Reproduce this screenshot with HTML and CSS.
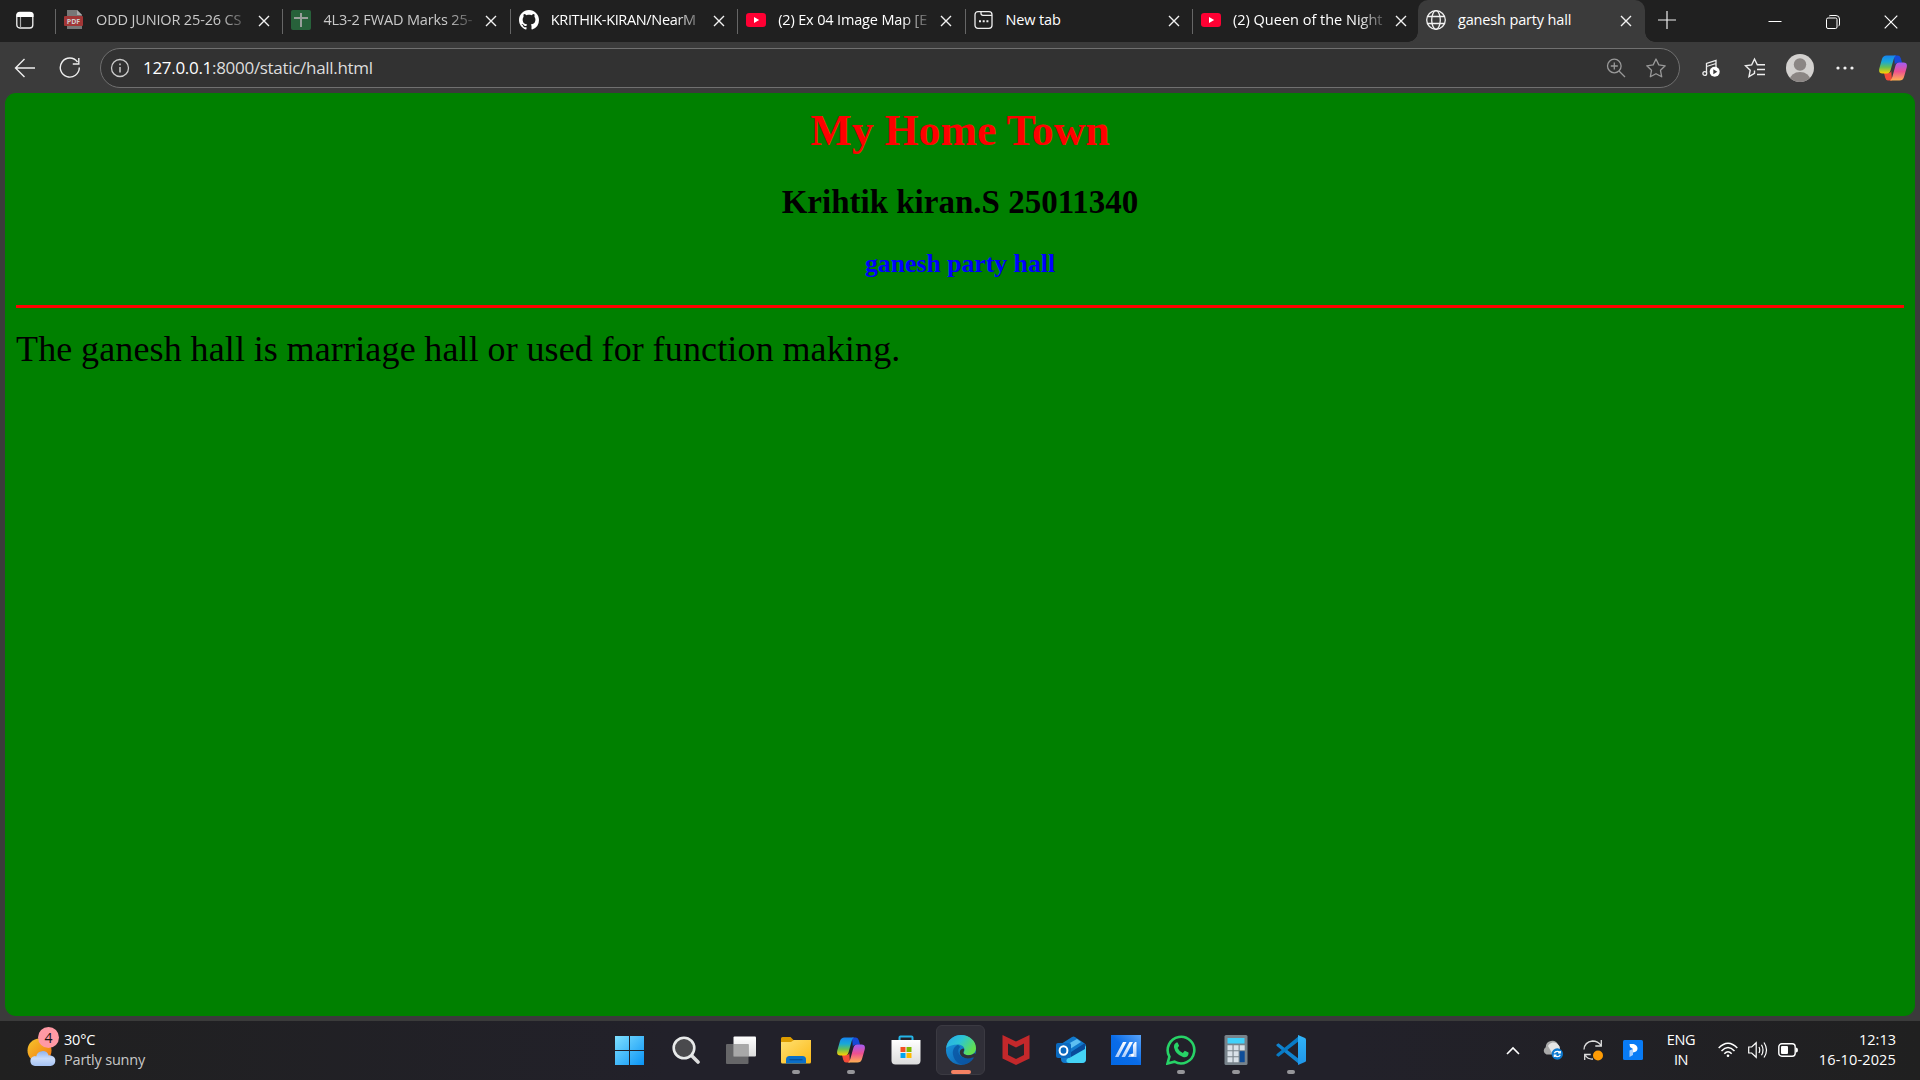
FILE: index.html
```html
<!DOCTYPE html>
<html lang="en">
<head>
<meta charset="utf-8">
<title>ganesh party hall</title>
<link rel="stylesheet" href="styles.css">
</head>
<body>
<svg class="defs" width="0" height="0" aria-hidden="true">
  <defs>
    <linearGradient id="cpA" x1="0" y1="0" x2="0" y2="1"><stop offset="0" stop-color="#1684f0"/><stop offset=".35" stop-color="#19a8d8"/><stop offset=".65" stop-color="#66bf55"/><stop offset="1" stop-color="#ffd000"/></linearGradient>
    <linearGradient id="cpB" x1="0" y1="0" x2="0" y2="1"><stop offset="0" stop-color="#a15cf5"/><stop offset=".5" stop-color="#ee5090"/><stop offset="1" stop-color="#ffb152"/></linearGradient>
    <linearGradient id="win" x1="0" y1="0" x2="1" y2="1"><stop offset="0" stop-color="#7fe0ff"/><stop offset="1" stop-color="#0a94f5"/></linearGradient>
    <linearGradient id="folder" x1="0" y1="0" x2="1" y2="1"><stop offset="0" stop-color="#ffe072"/><stop offset="1" stop-color="#fcb916"/></linearGradient>
    <linearGradient id="sun" x1="0" y1="0" x2="1" y2="1"><stop offset="0" stop-color="#f5c62c"/><stop offset="1" stop-color="#f4730f"/></linearGradient>
    <linearGradient id="cloud" x1="0" y1="0" x2="0" y2="1"><stop offset="0" stop-color="#8fb3ee"/><stop offset=".5" stop-color="#c9dcfb"/><stop offset="1" stop-color="#a5c2f3"/></linearGradient>
    <linearGradient id="edgeTop" x1="0" y1="0" x2="1" y2=".5"><stop offset="0" stop-color="#29a8ec"/><stop offset=".5" stop-color="#2cc5d5"/><stop offset="1" stop-color="#62df50"/></linearGradient>
    <linearGradient id="edgeLow" x1="0" y1="0" x2="1" y2="1"><stop offset="0" stop-color="#1b9de2"/><stop offset="1" stop-color="#0b55a5"/></linearGradient>
    <linearGradient id="white" x1="0" y1="0" x2="0" y2="1"><stop offset="0" stop-color="#fff"/><stop offset="1" stop-color="#dcdcdc"/></linearGradient>
    <linearGradient id="vs" x1="0" y1="0" x2="0" y2="1"><stop offset="0" stop-color="#31b4f8"/><stop offset="1" stop-color="#1f95e8"/></linearGradient>
    <linearGradient id="asus" x1="1" y1="0" x2="0" y2="1"><stop offset="0" stop-color="#5aa4f9"/><stop offset=".5" stop-color="#0a6ce8"/><stop offset="1" stop-color="#0268e4"/></linearGradient>
    <linearGradient id="slash" x1="0" y1="0" x2="0" y2="1"><stop offset="0" stop-color="#fff"/><stop offset="1" stop-color="#a9cbfb"/></linearGradient>
    <symbol id="close" viewBox="0 0 12 12"><path d="M1 1l10 10M11 1L1 11" fill="none" stroke="#f2f2f2" stroke-width="1.4"/></symbol>
    <symbol id="youtube" viewBox="0 0 20 20"><rect y="3" width="20" height="14" rx="3.2" fill="#ff0033"/><path d="M8 7v6l5.2-3z" fill="#fff"/></symbol>
    <symbol id="copilot" viewBox="0 0 28 26">
      <path d="M15 .5h4q2 0 2.8 2.8l1.3 4.5h-4.5q-2.300 0-2.800 2z" fill="#1649d8"/>
      <path d="M13 25.500H9q-2 0-2.800-2.800L5 18h4.500q2.300 0 2.800-2z" fill="#f34b39"/>
      <path d="M7.500.5H17q-1.500.7-2.300 3.500L11.500 15.500q-.9 3-3.700 3H3.500Q-.8 18.500.3 13.500L3 4Q4 .5 7.500.5z" fill="url(#cpA)"/>
      <path d="M20.500 25.500H11q1.500-.7 2.300-3.500l3.200-11.500q.9-3 3.700-3h4.300q4.300 0 3.200 5L25 22q-1 3.500-4.500 3.500z" fill="url(#cpB)"/>
    </symbol>
  </defs>
</svg>

<header class="tabstrip">
  <button class="tab-actions"><svg width="20" height="20" viewBox="0 0 20 20"><rect x="1.800" y="2.500" width="16" height="15.500" rx="3" fill="none" stroke="#f2f2f2" stroke-width="1.300"/><path d="M1.500 7V4.500q0-2.500 3-2.500h11q3 0 3 2.500V7z" fill="#fff"/><path d="M5.500 7v11" stroke="#aaa" stroke-width="1.200"/></svg></button>
  <nav class="tabs">
    <div class="tab tab-sleeping">
      <svg class="favicon" viewBox="0 0 20 20"><path d="M3 0h10l5 5v14H3z" fill="#777"/><path d="M13 0v5h5z" fill="#aaa"/><rect y="6" width="19" height="10" rx="1" fill="#a23636"/><text x="9.500" y="13.500" class="pdf-label">PDF</text></svg>
      <span class="tab-title faded">ODD JUNIOR 25-26 CS</span><svg class="tab-close"><use href="#close"/></svg>
    </div>
    <div class="tab tab-sleeping">
      <svg class="favicon" viewBox="0 0 20 20"><rect width="20" height="20" rx="2" fill="#27613a"/><path d="M10 3v14M3 8h14" stroke="#999f9b" stroke-width="2"/></svg>
      <span class="tab-title faded">4L3-2 FWAD Marks 25-</span><svg class="tab-close"><use href="#close"/></svg>
    </div>
    <div class="tab">
      <svg class="favicon" viewBox="0 0 16 16"><path fill="#fff" d="M8 0C3.580 0 0 3.580 0 8c0 3.540 2.290 6.530 5.470 7.590.4.070.55-.17.55-.38 0-.19-.01-.82-.01-1.490-2.010.37-2.530-.49-2.690-.94-.09-.23-.48-.94-.82-1.130-.28-.15-.68-.52-.01-.53.63-.01 1.080.58 1.230.82.72 1.210 1.870.87 2.330.66.070-.52.28-.87.51-1.070-1.780-.2-3.640-.89-3.640-3.950 0-.87.31-1.590.82-2.150-.08-.2-.36-1.020.08-2.120 0 0 .67-.21 2.200.82.64-.18 1.320-.27 2-.27s1.360.09 2 .27c1.530-1.040 2.200-.82 2.200-.82.44 1.100.16 1.920.08 2.120.51.56.82 1.270.82 2.150 0 3.070-1.870 3.750-3.650 3.950.29.25.54.73.54 1.480 0 1.070-.01 1.930-.01 2.200 0 .21.15.46.55.38A8.010 8.010 0 0 0 16 8c0-4.420-3.580-8-8-8z"/></svg>
      <span class="tab-title tight faded">KRITHIK-KIRAN/NearM</span><svg class="tab-close"><use href="#close"/></svg>
    </div>
    <div class="tab">
      <svg class="favicon"><use href="#youtube"/></svg>
      <span class="tab-title faded">(2) Ex 04 Image Map [E</span><svg class="tab-close"><use href="#close"/></svg>
    </div>
    <div class="tab">
      <svg class="favicon" viewBox="0 0 20 20" fill="none" stroke="#eee" stroke-width="1.300"><rect x="1" y="1.700" width="17" height="16.600" rx="3"/><path d="M7 2v1.500q0 1.800 2 1.800h9"/><path d="M5 11.200h2M8.700 11.200h2M12.400 11.200h2" stroke-width="2"/></svg>
      <span class="tab-title">New tab</span><svg class="tab-close"><use href="#close"/></svg>
    </div>
    <div class="tab">
      <svg class="favicon"><use href="#youtube"/></svg>
      <span class="tab-title wide faded">(2) Queen of the Night</span><svg class="tab-close"><use href="#close"/></svg>
    </div>
    <div class="tab tab-active">
      <svg class="favicon" viewBox="0 0 20 20" fill="none" stroke="#f2f2f2" stroke-width="1.300"><circle cx="10" cy="10" r="9.300"/><ellipse cx="10" cy="10" rx="4.300" ry="9.300"/><path d="M1.500 6.500h17M1.500 13.500h17"/></svg>
      <span class="tab-title">ganesh party hall</span><svg class="tab-close"><use href="#close"/></svg>
    </div>
  </nav>
  <button class="new-tab"><svg width="18" height="18" viewBox="0 0 18 18"><path d="M9 0v18M0 9h18" stroke="#eee" stroke-width="1.200"/></svg></button>
  <div class="window-controls">
    <button><svg width="14" height="14" viewBox="0 0 14 14"><path d="M.5 6.500h13" stroke="#fff"/></svg></button>
    <button><svg width="14" height="14" viewBox="0 0 14 14" fill="none" stroke="#fff"><rect x=".5" y="3" width="10.500" height="10.500" rx="1.500"/><path d="M3 1.200Q3.500.5 5 .5h5q3.500 0 3.500 3.500v5q0 1.500-1 2.200"/></svg></button>
    <button><svg width="14" height="14" viewBox="0 0 14 14"><path d="M.7.7l12.600 12.600M13.300.7L.7 13.300" stroke="#fff" stroke-width="1.200"/></svg></button>
  </div>
</header>

<div class="toolbar">
  <button class="tool"><svg width="22" height="20" viewBox="0 0 22 20" fill="none" stroke="#eee" stroke-width="1.400"><path d="M21 10H2M10.500 1L1.500 10l9 9"/></svg></button>
  <button class="tool"><svg width="22" height="22" viewBox="0 0 22 22" fill="none" stroke="#eee" stroke-width="1.400"><path d="M20.300 10.500A9.500 9.500 0 1 1 18.500 5M19.800 1v6h-6"/></svg></button>
  <div class="address">
    <svg width="20" height="20" viewBox="0 0 20 20" fill="none" stroke="#ccc" stroke-width="1.300"><circle cx="10" cy="10" r="8.500"/><path d="M10 9v5.500M10 5.600v1.600" stroke-width="1.500"/></svg>
    <div class="url"><span class="host">127.0.0.1</span>:8000/static/hall.html</div>
    <svg class="zoom-icon" width="20" height="20" viewBox="0 0 20 20" fill="none" stroke="#999" stroke-width="1.300"><circle cx="8.300" cy="8" r="6.800"/><path d="M13 13l6 6M8.300 4.500v7M4.800 8h7"/></svg>
    <svg width="22" height="22" viewBox="0 0 22 22" fill="none" stroke="#999" stroke-width="1.300" stroke-linejoin="round"><path d="M11 2l2.800 5.900 6.400.9-4.700 4.500 1.200 6.500-5.700-3.100-5.700 3.100 1.200-6.500L1.800 8.800l6.400-.9z"/></svg>
  </div>
  <div class="tools">
    <svg width="18" height="18" viewBox="0 0 18 18"><path d="M4.500 14V4.500L14 1.500V9M4.500 7.500L14 4.500" fill="none" stroke="#eee" stroke-width="1.300"/><circle cx="2.800" cy="14.500" r="1.900" fill="none" stroke="#eee" stroke-width="1.300"/><circle cx="12.700" cy="12.800" r="5" fill="#fff"/><path d="M11.300 10.300v5l4-2.500z" fill="#3b3b3b"/></svg>
    <svg class="favorites" width="22" height="22" viewBox="0 0 22 22" fill="none" stroke="#eee" stroke-width="1.400"><path d="M10.500 13.500v2.800L5 19.600l1.200-6.300L1.500 8.800l6.200-.9L10.500 2l2.800 5.700H21M13 12.500h8M13 17.500h8"/></svg>
    <svg class="avatar" width="28" height="28" viewBox="0 0 28 28"><clipPath id="av"><circle cx="14" cy="14" r="14"/></clipPath><g clip-path="url(#av)"><path fill="#d3d1cf" d="M0 0h28v28H0z"/><circle cx="14" cy="10.500" r="6.200" fill="#8b8684"/><ellipse cx="14" cy="26.500" rx="10.500" ry="8.500" fill="#8b8684"/></g></svg>
    <svg class="more" width="18" height="4" viewBox="0 0 18 4" fill="#f2f2f2"><circle cx="2" cy="2" r="1.600"/><circle cx="9" cy="2" r="1.600"/><circle cx="16" cy="2" r="1.600"/></svg>
    <svg class="tool-copilot" width="28" height="26"><use href="#copilot"/></svg>
  </div>
</div>

<div class="viewport">
  <main class="page">
    <h1>My Home Town</h1>
    <h2>Krihtik kiran.S 25011340</h2>
    <h3>ganesh party hall</h3>
    <hr>
    <p>The ganesh hall is marriage hall or used for function making.</p>
  </main>
</div>

<footer class="taskbar">
  <div class="weather">
    <div class="weather-icon">
      <svg width="30" height="30" viewBox="0 0 30 30"><circle cx="12.500" cy="13.500" r="12" fill="url(#sun)"/><path d="M8 29a5 5 0 0 1-1-9.800q1.500-.3 2.200.2a6.500 6.500 0 0 1 12.500-1q1.500-.4 2.800.4A5.200 5.200 0 0 1 23.500 29z" fill="url(#cloud)"/></svg>
      <span class="badge">4</span>
    </div>
    <div class="weather-text"><div class="temp">30°C</div><div class="sky">Partly sunny</div></div>
  </div>
  <div class="apps">
    <div class="app start"><svg width="29" height="29" viewBox="0 0 29 29" fill="url(#win)"><path d="M0 0h14v14H0zM15 0h14v14H15zM0 15h14v14H0zM15 15h14v14H15z"/></svg></div>
    <div class="app"><svg width="28" height="28" viewBox="0 0 28 28"><path d="M19 19l7 7" stroke="#ddd" stroke-width="3.600" stroke-linecap="round"/><circle cx="12" cy="12" r="10.300" fill="#4a4a4d" stroke="#e8eaea" stroke-width="2.600"/></svg></div>
    <div class="app"><svg width="30" height="28" viewBox="0 0 30 28"><rect x="7.500" y=".5" width="22.500" height="20" rx="1" fill="url(#white)"/><rect x="0" y="8" width="22.500" height="20" rx="1" fill="#707071" opacity=".88"/><path d="M7.500 8h15v12.500h-15z" fill="#a8a8a8"/></svg></div>
    <div class="app running"><svg width="30" height="28" viewBox="0 0 30 28"><path d="M0 2.500Q0 1 1.500 1h8l3 3H25v8H0z" fill="#dd9c00"/><path d="M0 6h10l3-2h17v22q0 1.500-1.500 1.500h-27Q0 27.500 0 26z" fill="url(#folder)"/><path d="M5 27.500v-4q0-3.500 3.500-3.500h13q3.500 0 3.500 3.500v4z" fill="#0b6fc8"/><path d="M8.500 23.700h13" stroke="#07509a" stroke-width="1.300"/></svg></div>
    <div class="app running"><svg width="28" height="26"><use href="#copilot"/></svg></div>
    <div class="app"><svg width="30" height="30" viewBox="0 0 30 30"><path d="M8.500 6V2.500q0-1 1-1h11q1 0 1 1V6" fill="none" stroke="#24b5e8" stroke-width="2"/><path d="M.5 5h29v20.500q0 4-4 4h-21q-4 0-4-4z" fill="url(#white)"/><path fill="#f25022" d="M9.500 12h5v5h-5z"/><path fill="#7fba00" d="M15.500 12h5v5h-5z"/><path fill="#00a4ef" d="M9.500 18h5v5h-5z"/><path fill="#ffb900" d="M15.500 18h5v5h-5z"/></svg></div>
    <div class="app focused"><svg width="30" height="30" viewBox="0 0 30 30"><circle cx="15" cy="15" r="15" fill="url(#edgeLow)"/><path d="M.2 13C1 5.500 7.200 0 15 0c8.500 0 15 6 15 13.200 0 4.500-3.500 7-7.500 7-3.500 0-5-1.300-5-2.200 0-.8 1-1.200 1-3.200 0-3-2.800-5.300-6.800-5.300C7 9.500 3 11 .2 13z" fill="url(#edgeTop)"/><path d="M12 9.700C8 11.500 6.300 15.500 7 19.500c.8 5 4.500 9.300 9.500 10.300 4-.3 8.500-3 10.800-6.800.2-.6-.3-.8-.8-.5-6 2.500-14.200-.5-14.200-6.500 0-1.800.8-3 1.900-4z" fill="#0a529f" opacity=".75"/><path d="M17.800 13.500c1 2-.8 3.500-.3 4.700.8 1.600 3.500 2 5 2 2.500 0 4.500-.8 5.800-2l2.200 1-2 3.500-2-.2c-6 2.500-13-.5-12.700-5.500.1-2 2-3.500 4-3.500z" fill="#302f38"/></svg></div>
    <div class="app"><svg width="28" height="30" viewBox="0 0 28 30"><path d="M.5 0L14 6.500 27.500 0v23.500L14 30 .5 23.500z" fill="#c3282b"/><path d="M6 8.500l8 4 8-4v11.500L14 24l-8-4z" fill="#24222a"/></svg></div>
    <div class="app"><svg width="30" height="28" viewBox="0 0 30 28"><path d="M5 8L16 1q1.500-.8 3 0l9 6q2 1.200 2 3v13q0 4-4 4H9q-4 0-4-4z" fill="#1179cc"/><path d="M12 8l9-5 4 3-11 7z" fill="#5dbff2"/><path d="M30 10L11 23q-2 3 2 4h13q4 0 4-4z" fill="#45d3f5"/><path d="M15 16L29 7v6l-14 8z" fill="#084b9b"/><rect y="7" width="15" height="15" rx="2" fill="#0a69be"/><ellipse cx="7.500" cy="14.500" rx="3.900" ry="4.300" fill="none" stroke="#fff" stroke-width="2"/></svg></div>
    <div class="app"><svg width="30" height="30" viewBox="0 0 30 30"><path d="M0 0h30v30H0z" fill="url(#asus)"/><path d="M4 22L12 7h3.500L7.500 22zM10.500 22l8-15H22l-8 15zM17 22l1.700-3H22v-9l2-3h1.500v15z" fill="url(#slash)"/><circle cx="21.500" cy="20" r="1.500" fill="#fff"/></svg></div>
    <div class="app running"><svg width="30" height="30" viewBox="0 0 30 30"><path d="M1.500 28.500L3.400 21.600A13.300 13.300 0 1 1 8.500 26.700z" fill="none" stroke="#27d367" stroke-width="2.600"/><path d="M10.500 7.500q-3 1.500-2.500 5 1.500 7 9 9.500 4.500 1 5.500-3v-1.500L18.800 15.700l-2 2.200q-3.500-1.300-5.200-5l1.500-2.200-1.500-3.200z" fill="#27d367"/></svg></div>
    <div class="app running"><svg width="24" height="30" viewBox="0 0 24 30"><rect x=".5" width="23" height="30" rx="1.500" fill="#78838b"/><path d="M3.500 3h17v5.500h-17z" fill="#3fd1fa"/><path d="M3.500 10.200h5v5h-5zM9.600 10.200h5v5h-5zM15.700 10.200h5v5h-5zM3.500 16.200h5v5h-5zM9.600 16.200h5v5h-5zM3.500 22.200h5v5h-5zM9.600 22.200h5v5h-5z" fill="#d9e1e8"/><path d="M15.700 16.200h5v11h-5z" fill="#0e4d98"/></svg></div>
    <div class="app running"><svg width="30" height="30" viewBox="0 0 30 30"><path d="M2.500 8.200L23 24v5L.8 11q-1-1 0-1.800z" fill="#1184d0"/><path d="M2.500 21.800L23 6V1L.8 19q-1 1 0 1.800z" fill="#087bc5"/><path d="M22 0l7 3q1 .5 1 1.500v21q0 1-1 1.500l-7 3z" fill="url(#vs)"/></svg></div>
  </div>
  <div class="tray">
    <div class="tray-item"><svg width="14" height="9" viewBox="0 0 14 9"><path d="M1 8l6-6 6 6" fill="none" stroke="#fff" stroke-width="1.600"/></svg></div>
    <div class="tray-item"><svg width="20" height="20" viewBox="0 0 20 20"><path d="M3.500 14.500a4 4 0 0 1-.8-7.200A6.500 6.500 0 0 1 15 4.500q2 1.500 1.800 4.500L12 14.500z" fill="#a9a9a9"/><path d="M5 6a6 6 0 0 1 10-1.500q2 1.500 1.800 4.500L9 13z" fill="#e6e6e6"/><circle cx="14.300" cy="14" r="5.700" fill="#0c79d0"/><path d="M11.300 13.300q.7-2 3-2 1.300 0 2.500 1.200M17.300 11v2h-2.200M17.300 14.700q-.7 2-3 2-1.300 0-2.500-1.200M11.300 17v-2h2.200" fill="none" stroke="#fff" stroke-width="1.200"/></svg></div>
    <div class="tray-item"><svg width="20" height="21" viewBox="0 0 20 21"><path d="M1 9.500Q1.500 2 9.500 1q5.500 0 8.500 4.500M18.300 0v6h-6M10 19Q5 19.500 2.500 15.500M1.700 20v-5.500h6" fill="none" stroke="#ddd" stroke-width="1.300"/><circle cx="15" cy="15.500" r="5" fill="#ff9c05"/></svg></div>
    <div class="tray-item"><svg width="20" height="20" viewBox="0 0 20 20"><rect width="20" height="20" rx="1.500" fill="#087bf5"/><path d="M6.500 4h4q4 1 4 4.500T10 12.500V9L7 7z" fill="#fff"/><path d="M6.500 10.500L10 9v6l-3.500 2z" fill="#a8d0ff"/></svg></div>
    <div class="language"><div>ENG</div><div>IN</div></div>
    <div class="status">
      <svg width="20" height="16" viewBox="0 0 20 16" fill="none" stroke="#fff" stroke-width="1.500"><path d="M.7 6Q10-3.500 19.300 6M3.500 9Q10 2.200 16.500 9M6.300 11.700q3.700-3.800 7.400 0"/><circle cx="10" cy="13.800" r="1.300" fill="#fff" stroke="none"/></svg>
      <svg width="20" height="18" viewBox="0 0 20 18" fill="none" stroke="#fff" stroke-width="1.200"><path d="M.7 6h3l4.500-4.300v14.600L3.700 12h-3zM11 6q1.500 3 0 6M13.500 3.700q3 5.300 0 10.600M16 1.500q5 7.500 0 15"/></svg>
      <svg width="20" height="14" viewBox="0 0 20 14"><rect x=".8" y=".8" width="16.400" height="12.400" rx="3" fill="none" stroke="#fff" stroke-width="1.400"/><rect x="3" y="3" width="7" height="8" rx="1" fill="#fff"/><path d="M18 4.500q2 0 2 2.500t-2 2.500z" fill="#fff"/></svg>
    </div>
    <div class="clock"><div class="time">12:13</div><div class="date">16-10-2025</div></div>
  </div>
</footer>
</body>
</html>
```
FILE: styles.css
```css
* { box-sizing: border-box; }

body {
  margin: 0;
  width: 1920px;
  height: 1080px;
  overflow: hidden;
  display: flex;
  flex-direction: column;
  background: #3b3b3b;
  color: #fff;
  font-family: "Open Sans", "Noto Sans", sans-serif;
}

svg { display: block; flex: none; }
.defs { position: absolute; }

button {
  display: flex;
  align-items: center;
  justify-content: center;
  margin: 0;
  padding: 0;
  border: 0;
  background: none;
}

/* Tab strip */
.tabstrip { display: flex; flex: none; height: 42px; background: #202020; }
.tab-actions { width: 55px; padding: 0 5px 2px 0; }
.tabs { display: flex; }

.tab {
  position: relative;
  display: flex;
  align-items: center;
  width: 227.400px;
  height: 42px;
  padding: 0 0 2px 9px;
}
.tab::before {
  content: "";
  position: absolute;
  left: 0;
  top: 9px;
  width: 1px;
  height: 25px;
  background: #666;
}
.favicon { width: 20px; height: 20px; }
.pdf-label { font: bold 7px "Open Sans", sans-serif; fill: #ccc; text-anchor: middle; }
.tab-title {
  width: 152px;
  margin-left: 12px;
  white-space: nowrap;
  font-size: 14.500px;
  line-height: 20px;
  letter-spacing: -0.15px;
}
.tab-title.tight { letter-spacing: -0.35px; }
.tab-title.wide { letter-spacing: 0; }
.faded {
  -webkit-mask-image: linear-gradient(90deg, #000 82%, rgba(0, 0, 0, 0.15));
  mask-image: linear-gradient(90deg, #000 82%, rgba(0, 0, 0, 0.15));
}
.tab-sleeping .tab-title { color: #c9c9c9; }
.tab-close { width: 12px; height: 12px; margin: 2px 0 0 10px; }

.tab-active { margin-left: -1.400px; padding-left: 8px; background: #3b3b3b; border-radius: 10px 10px 0 0; }
.tab-active::before,
.tab-active::after {
  top: auto;
  bottom: 0;
  width: 10px;
  height: 10px;
  background: radial-gradient(circle at 0 0, #202020 9.500px, #3b3b3b 10px);
}
.tab-active::before { left: -10px; }
.tab-active::after {
  content: "";
  position: absolute;
  right: -10px;
  background: radial-gradient(circle at 100% 0, #202020 9.500px, #3b3b3b 10px);
}
.new-tab { width: 43px; padding-bottom: 3px; }
.window-controls { display: flex; margin-left: auto; }
.window-controls button { width: 58px; padding-top: 1px; }

/* Toolbar */
.toolbar { display: flex; flex: none; align-items: center; height: 51px; padding: 0 13px 0 2px; }
.tool { width: 45px; height: 45px; }
.address {
  display: flex;
  align-items: center;
  width: 1580px;
  height: 40px;
  margin-left: 8px;
  padding: 0 12px 0 9px;
  border: 1px solid #707070;
  border-radius: 20px;
  background: #323232;
}
.url { flex: 1; margin-left: 13px; font-size: 17px; line-height: 24px; letter-spacing: -0.3px; color: #ddd; }
.host { color: #fff; }
.zoom-icon { margin-right: 19px; }
.tools { display: flex; flex: 1; align-items: center; padding-left: 22px; }
.favorites { margin-left: 24px; }
.avatar { margin-left: 20px; }
.more { margin-left: 22px; }
.tool-copilot { margin-left: auto; }

/* Page */
.viewport { flex: none; height: 928px; padding: 0 5px 5px; }
.page {
  height: 923px;
  padding: 12px 11px 11px;
  border-radius: 11px;
  background: #008000;
  color: #000;
  font-family: "Liberation Serif", serif;
}
h1, h2, h3 { text-align: center; font-weight: bold; }
h1 { margin: 0 0 28px; font-size: 43.800px; line-height: 50px; color: #f00; }
h2 { margin: 0 0 28px; font-size: 33px; line-height: 38px; }
h3 { margin: 0 0 26px; font-size: 25.740px; line-height: 30px; color: #00f; }
hr { height: 3px; margin: 0; border: 0; background: #f00; }
.page p { margin: 20px 0 0; font-size: 36px; line-height: 42px; letter-spacing: 0.16px; word-spacing: -0.6px; white-space: nowrap; }

/* Taskbar */
.taskbar {
  display: grid;
  grid-template-columns: 603px 715px 1fr;
  height: 59px;
  background: linear-gradient(90deg, #202020, #22212a 35%, #22212a 70%, #202020);
}
.weather { display: flex; align-items: center; padding: 0 0 1px 27px; }
.weather-icon { position: relative; margin-top: 3px; }
.badge {
  position: absolute;
  left: 11px;
  top: -10px;
  width: 21px;
  height: 21px;
  border-radius: 50%;
  background: #ff99a4;
  color: #111;
  font-size: 14px;
  line-height: 21px;
  text-align: center;
}
.weather-text { margin: -1px 0 0 7px; font-size: 14.500px; line-height: 20px; letter-spacing: -0.2px; }
.sky { color: #c8c8c8; }

.apps { display: flex; }
.app {
  position: relative;
  display: flex;
  align-items: center;
  justify-content: center;
  width: 55px;
  height: 58px;
}
.start { padding-right: 2px; }
.running::after,
.focused::after {
  content: "";
  position: absolute;
  left: 24px;
  bottom: 5px;
  width: 8px;
  height: 4px;
  border-radius: 2px;
  background: #96969a;
}
.focused { width: 49px; height: 50px; margin: 4px 3px 0; border: 1px solid #3b3a42; border-radius: 6px; background: #302f38; }
.focused::after { left: 14px; bottom: 0; width: 20px; background: #f58263; }

.tray { display: flex; align-items: center; height: 58px; padding: 0 24px 0 175px; }
.tray-item { display: flex; justify-content: center; width: 40px; }
.language,
.clock { font-size: 14.500px; line-height: 20px; letter-spacing: -0.4px; }
.language { width: 56px; text-align: center; }
.status { display: flex; align-items: center; gap: 10px; margin-left: 9px; }
.clock { margin-left: auto; text-align: right; letter-spacing: 0; }
.date { letter-spacing: 0.15px; }
```
